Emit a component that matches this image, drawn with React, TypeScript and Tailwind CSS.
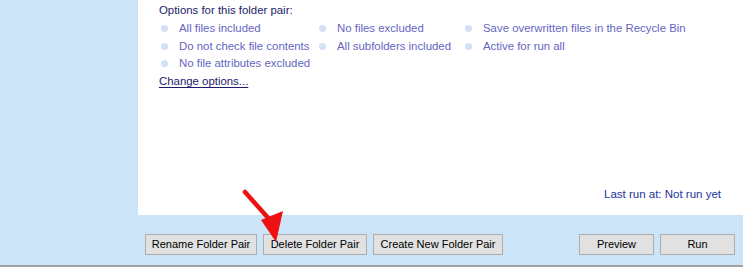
import React from "react";

const font = { fontFamily: '"Liberation Sans", Arial, sans-serif' };

function Opt({ label }: { label: string }) {
  return (
    <div className="flex items-center h-[17.7px] whitespace-nowrap">
      <span className="w-[7px] h-[7px] rounded-full bg-[#d3e0f6] ml-[2px] mr-[11px] shrink-0" />
      <span className="text-[#6565c2]">{label}</span>
    </div>
  );
}

function Btn({ label, w }: { label: string; w: string }) {
  return (
    <div
      className={`${w} h-[21px] bg-[#e1e1e1] border border-[#adadad] flex items-center justify-center text-[11px] text-black`}
    >
      {label}
    </div>
  );
}

export default function App() {
  return (
    <div className="relative w-[743px] h-[267px] bg-[#cce4f7] flex flex-col overflow-hidden" style={font}>
      <div className="flex h-[215px]">
        <div className="w-[138px] shrink-0" />
        <div className="flex-1 bg-white pl-[21px] pt-[2px] pr-[22px] flex flex-col text-[11.4px]">
          <div className="h-[17.7px] flex items-center text-[#1c1c6a]">Options for this folder pair:</div>
          <div className="grid grid-cols-[158px_146px_auto]">
            <Opt label="All files included" />
            <Opt label="No files excluded" />
            <Opt label="Save overwritten files in the Recycle Bin" />
            <Opt label="Do not check file contents" />
            <Opt label="All subfolders included" />
            <Opt label="Active for run all" />
            <Opt label="No file attributes excluded" />
          </div>
          <div className="h-[17.7px] flex items-center">
            <span className="text-[#1c1c6a] underline underline-offset-2">Change options...</span>
          </div>
          <div className="flex-1" />
          <div className="flex justify-end h-[18px] mb-[11px] items-center text-[#23349a] text-[11.5px]">
            Last run at: Not run yet
          </div>
        </div>
      </div>
      <div className="flex-1 flex items-start pt-[19px] pl-[145px]">
        <Btn label="Rename Folder Pair" w="w-[112px]" />
        <div className="w-[6px]" />
        <Btn label="Delete Folder Pair" w="w-[104px]" />
        <div className="w-[6px]" />
        <Btn label="Create New Folder Pair" w="w-[130px]" />
        <div className="w-[76px]" />
        <Btn label="Preview" w="w-[75px]" />
        <div className="w-[6px]" />
        <Btn label="Run" w="w-[75px]" />
      </div>
      <div className="h-[2px] bg-[#a0a0a0]" />
      <svg className="absolute left-0 top-0 pointer-events-none" width="743" height="267">
        <line x1="245" y1="192" x2="270" y2="220" stroke="#ee1111" strokeWidth="4.5" strokeLinecap="round" />
        <polygon points="261,220 283,211 276,242" fill="#ee1111" />
      </svg>
    </div>
  );
}
